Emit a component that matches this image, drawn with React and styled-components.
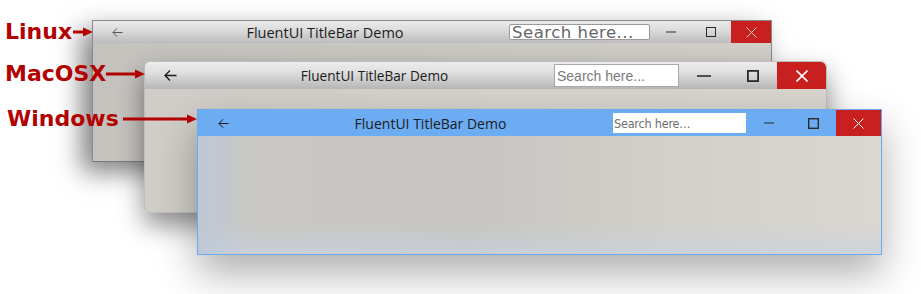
import styled, { createGlobalStyle } from "styled-components";

const GlobalStyle = createGlobalStyle`
  html, body {
    margin: 0;
    padding: 0;
    background: #ffffff;
  }
`;

const Desktop = styled.div`
  position: relative;
  width: 921px;
  height: 294px;
  overflow: hidden;
  background: #ffffff;
  font-family: "Open Sans", "Noto Sans", sans-serif;
`;

// windows sit on a free canvas, stacked over each other
const Frame = styled.div`
  position: absolute;
  box-sizing: border-box;
  display: flex;
  flex-direction: column;
  overflow: hidden;
`;

const LinuxFrame = styled(Frame)`
  left: 92px;
  top: 20px;
  width: 680px;
  height: 142px;
  border: 1px solid #8a8a8a;
  border-bottom-color: #7c7c7c;
  background: linear-gradient(to right, #c4c2bd, #cac8c3 50%, #d2cfc9);
  box-shadow: -10px 10px 24px rgba(0, 0, 0, 0.5);
  z-index: 1;
`;

const MacFrame = styled(Frame)`
  left: 144px;
  top: 61px;
  width: 683px;
  height: 152px;
  border: 1px solid #bdbdbd;
  border-radius: 6px 6px 0 4px;
  background: linear-gradient(to right, #d0cdc8, #d5d2cc 50%, #d8d5cf);
  box-shadow: 0 12px 26px rgba(0, 0, 0, 0.45);
  z-index: 2;
`;

const WinFrame = styled(Frame)`
  left: 197px;
  top: 109px;
  width: 685px;
  height: 146px;
  border: 1px solid #6aaaf0;
  background:
    linear-gradient(to right, rgba(188, 200, 216, 0.9) 0, rgba(188, 200, 216, 0) 50px),
    linear-gradient(to top, rgba(200, 210, 224, 0.7) 0, rgba(200, 210, 224, 0) 30px),
    linear-gradient(to right, #c9c8c4, #c6c5c1 40%, #d2d0ca 70%, #dad7d1);
  box-shadow: 0 18px 38px rgba(0, 0, 0, 0.32);
  z-index: 3;
`;

const TitleBar = styled.div`
  display: flex;
  align-items: center;
  flex: none;
  height: ${(p) => p.$height}px;
  background: ${(p) => p.$bg};
`;

const BackButton = styled.div`
  display: flex;
  align-items: center;
  justify-content: center;
  flex: none;
  width: ${(p) => p.$width}px;
  height: 100%;
  color: ${(p) => p.$color};
`;

const Title = styled.div`
  flex: 1;
  text-align: center;
  font-size: ${(p) => p.$size}px;
  color: #1c1c1c;
  white-space: nowrap;
`;

const Search = styled.div`
  box-sizing: border-box;
  flex: none;
  display: flex;
  align-items: center;
  width: ${(p) => p.$width}px;
  height: ${(p) => p.$height}px;
  background: #ffffff;
  white-space: nowrap;
  overflow: hidden;
`;

const LinuxSearch = styled(Search)`
  border: 1px solid #9a9a9a;
  border-radius: 2px;
  padding-left: 2px;
  font-family: "DejaVu Sans", sans-serif;
  font-size: 16.5px;
  letter-spacing: 0.5px;
  color: #666666;
`;

const MacSearch = styled(Search)`
  border: 1px solid #a9a9a9;
  padding-left: 2px;
  font-family: "Liberation Sans", Arial, sans-serif;
  font-size: 14px;
  color: #7a7a7a;
`;

const WinSearch = styled(Search)`
  padding-left: 1px;
  font-family: "Liberation Sans Narrow", "DejaVu Sans Condensed", "Liberation Sans", sans-serif;
  font-size: 12.5px;
  letter-spacing: -0.2px;
  color: #6f6f6f;
`;

const Control = styled.div`
  display: flex;
  align-items: center;
  justify-content: center;
  flex: none;
  width: ${(p) => p.$width}px;
  height: 100%;
  color: ${(p) => (p.$close ? p.$glyph || "#ffffff" : "#2b2b2b")};
  background: ${(p) => (p.$close ? "#c81f1f" : "transparent")};
  border-top-right-radius: ${(p) => p.$radius || 0}px;
`;

const Body = styled.div`
  flex: 1;
`;

const Label = styled.div`
  position: absolute;
  left: ${(p) => p.$x}px;
  top: ${(p) => p.$y}px;
  display: flex;
  align-items: center;
  gap: ${(p) => p.$gap}px;
  z-index: 5;
  font-family: "DejaVu Sans", sans-serif;
  font-weight: bold;
  font-size: 22px;
  line-height: 26px;
  color: #b30000;
`;

function Pointer({ length }) {
  return (
    <svg width={length} height="10" viewBox={`0 0 ${length} 10`}>
      <rect x="0" y="3.5" width={length - 9} height="3" fill="#b30000" />
      <polygon points={`${length - 10},0.5 ${length},5 ${length - 10},9.5`} fill="#b30000" />
    </svg>
  );
}

function BackArrow({ size, weight }) {
  const mid = size / 2;
  return (
    <svg width={size} height={size} viewBox={`0 0 ${size} ${size}`} fill="none">
      <path
        d={`M${size - 0.5} ${mid}H1M${mid - 0.5} ${mid - size / 2.6}L1 ${mid}L${mid - 0.5} ${mid + size / 2.6}`}
        stroke="currentColor"
        strokeWidth={weight}
      />
    </svg>
  );
}

function MinIcon({ width, weight }) {
  return (
    <svg width={width} height="4" viewBox={`0 0 ${width} 4`}>
      <rect x="0" y={2 - weight / 2} width={width} height={weight} fill="currentColor" />
    </svg>
  );
}

function MaxIcon({ size, weight }) {
  const o = weight / 2;
  return (
    <svg width={size} height={size} viewBox={`0 0 ${size} ${size}`} fill="none">
      <rect x={o} y={o} width={size - weight} height={size - weight} stroke="currentColor" strokeWidth={weight} />
    </svg>
  );
}

function CloseIcon({ size, weight }) {
  return (
    <svg width={size} height={size} viewBox={`0 0 ${size} ${size}`} fill="none">
      <path d={`M0.5 0.5L${size - 0.5} ${size - 0.5}M${size - 0.5} 0.5L0.5 ${size - 0.5}`} stroke="currentColor" strokeWidth={weight} />
    </svg>
  );
}

const TITLE = "FluentUI TitleBar Demo";

export default function App() {
  return (
    <>
      <GlobalStyle />
      <Desktop>
        <Label $x={5} $y={19} $gap={1}>
          Linux
          <Pointer length={20} />
        </Label>
        <Label $x={5} $y={61} $gap={0}>
          MacOSX
          <Pointer length={39} />
        </Label>
        <Label $x={7} $y={106} $gap={4}>
          Windows
          <Pointer length={74} />
        </Label>

        <LinuxFrame>
          <TitleBar $height={22} $bg="linear-gradient(#ebebeb, #dcdcdc 40%, #bcbcbc)">
            <BackButton $width={48} $color="#555555">
              <BackArrow size={11} weight={1} />
            </BackButton>
            <Title $size={14.5}>{TITLE}</Title>
            <LinuxSearch $width={141} $height={16}>Search here...</LinuxSearch>
            <Control $width={41}>
              <MinIcon width={10} weight={1} />
            </Control>
            <Control $width={40}>
              <MaxIcon size={10} weight={1} />
            </Control>
            <Control $width={40} $close $glyph="#f3c6c6">
              <CloseIcon size={11} weight={1} />
            </Control>
          </TitleBar>
          <Body />
        </LinuxFrame>

        <MacFrame>
          <TitleBar $height={27} $bg="linear-gradient(#ededed, #dedede 40%, #b6b6b6)">
            <BackButton $width={50} $color="#1e1e1e">
              <BackArrow size={13} weight={1.4} />
            </BackButton>
            <Title $size={13.6}>{TITLE}</Title>
            <MacSearch $width={125} $height={23}>Search here...</MacSearch>
            <Control $width={49}>
              <MinIcon width={14} weight={1.6} />
            </Control>
            <Control $width={49}>
              <MaxIcon size={12} weight={1.8} />
            </Control>
            <Control $width={49} $close $radius={5}>
              <CloseIcon size={12} weight={1.6} />
            </Control>
          </TitleBar>
          <Body />
        </MacFrame>

        <WinFrame>
          <TitleBar $height={26} $bg="#6cacf3">
            <BackButton $width={50} $color="#1c1c1c">
              <BackArrow size={11} weight={1} />
            </BackButton>
            <Title $size={14}>{TITLE}</Title>
            <WinSearch $width={133} $height={20}>Search here…</WinSearch>
            <Control $width={45}>
              <MinIcon width={10} weight={1} />
            </Control>
            <Control $width={45}>
              <MaxIcon size={11} weight={1.4} />
            </Control>
            <Control $width={45} $close>
              <CloseIcon size={11} weight={1} />
            </Control>
          </TitleBar>
          <Body />
        </WinFrame>
      </Desktop>
    </>
  );
}
